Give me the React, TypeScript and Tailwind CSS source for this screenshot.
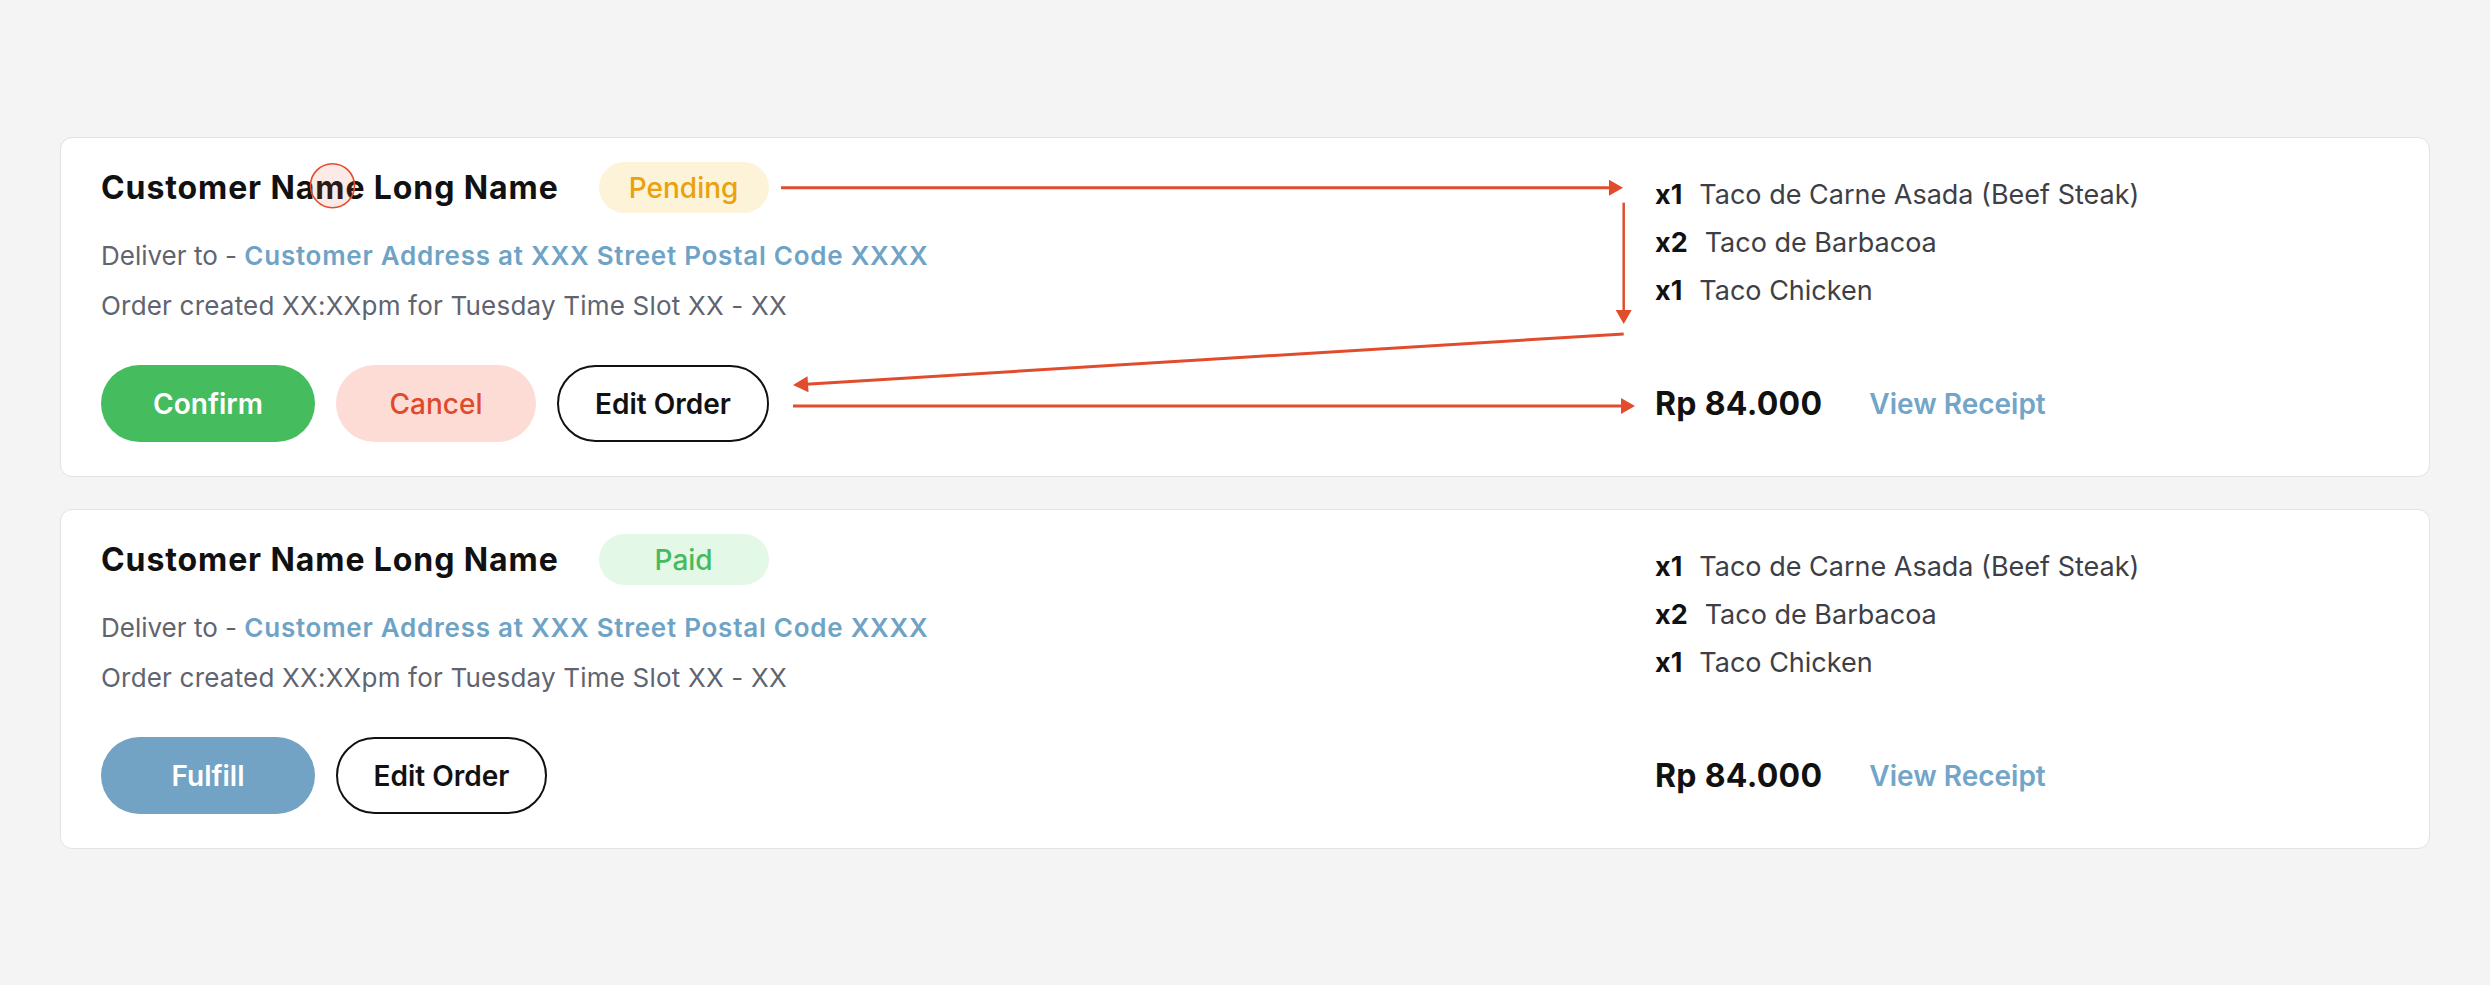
import React from "react";

type Item = { qty: string; name: string };

const items: Item[] = [
  { qty: "x1", name: "Taco de Carne Asada (Beef Steak)" },
  { qty: "x2", name: "Taco de Barbacoa" },
  { qty: "x1", name: "Taco Chicken" },
];

function Annotations() {
  const c = "#e14d2c";
  return (
    <svg
      className="pointer-events-none absolute left-0 top-0 overflow-visible"
      width="2370"
      height="340"
    >
      <circle cx="271.5" cy="47.7" r="22" fill="rgba(232,90,60,0.13)" stroke={c} strokeWidth="1.6" />
      {/* arrow 1 */}
      <line x1="720" y1="49.7" x2="1549" y2="49.7" stroke={c} strokeWidth="3" />
      <polygon points="1562,49.7 1548,41.7 1548,57.7" fill={c} />
      {/* arrow 2 */}
      <line x1="1562.7" y1="64.7" x2="1562.7" y2="173" stroke={c} strokeWidth="2.5" />
      <polygon points="1562.7,186 1554.7,172 1570.7,172" fill={c} />
      {/* arrow 3 */}
      <line x1="1562.7" y1="196" x2="745" y2="246.2" stroke={c} strokeWidth="3" />
      <polygon points="732,247 746.5,238.2 747.5,254.2" fill={c} />
      {/* arrow 4 */}
      <line x1="732" y1="268" x2="1561" y2="268" stroke={c} strokeWidth="3" />
      <polygon points="1574,268 1560,260 1560,276" fill={c} />
    </svg>
  );
}

function ItemsCol() {
  return (
    <div className="mt-[9px] flex flex-col">
      {items.map((it, i) => (
        <div key={i} className="flex h-[48px] items-center text-[27px] leading-[48px]">
          <span className="font-bold text-[#111111]">{it.qty}</span>
          <span className="ml-[17px] text-[#3e3f46]">{it.name}</span>
        </div>
      ))}
    </div>
  );
}

function OrderCard({ status, annotated }: { status: "pending" | "paid"; annotated?: boolean }) {
  return (
    <div className="relative flex rounded-xl border border-[#e2e2e2] bg-white pl-10 pt-[24px] pb-[34px]">
      <div className="flex flex-1 flex-col">
        <div className="flex h-[51px] items-center gap-10">
          <span className="text-[32px] font-bold tracking-[0.9px] text-[#111111]">Customer Name Long Name</span>
          {status === "pending" ? (
            <span className="flex h-[51px] w-[170px] items-center justify-center rounded-full bg-[#fdf3d9] text-[28px] font-medium text-[#e9a10c]">
              Pending
            </span>
          ) : (
            <span className="flex h-[51px] w-[170px] items-center justify-center rounded-full bg-[#e4f8e8] text-[28px] font-medium text-[#47bb5c]">
              Paid
            </span>
          )}
        </div>
        <div className="mt-[23px] h-[40px] text-[26px] leading-[40px] text-[#5f6470]">
          Deliver to - <span className="font-semibold tracking-[0.75px] text-[#6fa3c6]">Customer Address at XXX Street Postal Code XXXX</span>
        </div>
        <div className="mt-[10px] h-[40px] text-[26px] leading-[40px] tracking-[0.2px] text-[#5f6470]">
          Order created XX:XXpm for Tuesday Time Slot XX - XX
        </div>
        <div className="mt-[39px] flex h-[77px] gap-[21px]">
          {status === "pending" ? (
            <>
              <button className="flex h-[77px] w-[214px] items-center justify-center rounded-full bg-[#45bd5f] text-[28px] font-semibold text-white">
                Confirm
              </button>
              <button className="flex h-[77px] w-[200px] items-center justify-center rounded-full bg-[#fedcd6] text-[28px] font-medium text-[#e04a2c]">
                Cancel
              </button>
              <button className="flex h-[77px] w-[212px] items-center justify-center rounded-full border-2 border-[#111111] bg-white text-[28px] font-semibold text-[#111111]">
                Edit Order
              </button>
            </>
          ) : (
            <>
              <button className="flex h-[77px] w-[214px] items-center justify-center rounded-full bg-[#72a3c4] text-[28px] font-semibold text-white">
                Fulfill
              </button>
              <button className="flex h-[77px] w-[211px] items-center justify-center rounded-full border-2 border-[#111111] bg-white text-[28px] font-semibold text-[#111111]">
                Edit Order
              </button>
            </>
          )}
        </div>
      </div>
      <div className="flex w-[774px] shrink-0 flex-col justify-between">
        <ItemsCol />
        <div className="flex h-[77px] items-center">
          <span className="text-[32px] font-bold tracking-[0.3px] text-[#111111]">Rp 84.000</span>
          <span className="ml-[47px] text-[28px] font-semibold text-[#72a5c7]">View Receipt</span>
        </div>
      </div>
      {annotated && <Annotations />}
    </div>
  );
}

export default function App() {
  return (
    <div className="min-h-[985px] w-full bg-[#f4f4f4] px-[60px] pt-[137px] font-['Inter',sans-serif]">
      <div className="flex flex-col gap-[32px]">
        <OrderCard status="pending" annotated />
        <OrderCard status="paid" />
      </div>
    </div>
  );
}
